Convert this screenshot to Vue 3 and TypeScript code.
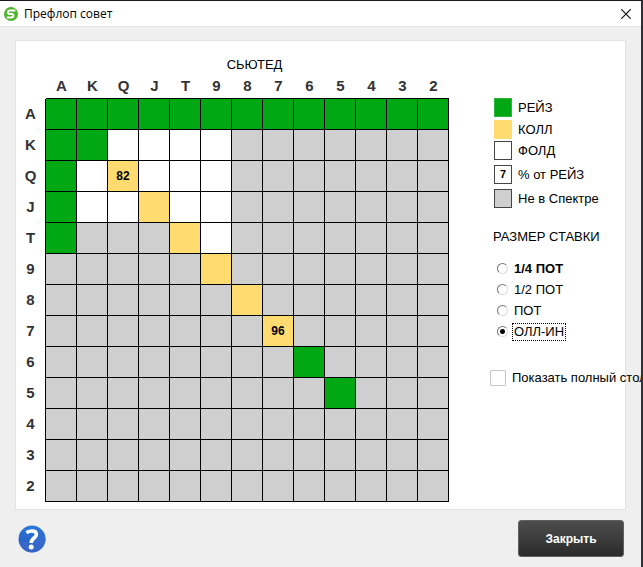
<script setup lang="ts">
import { ref } from 'vue'

type Action = 'raise' | 'call' | 'fold' | 'out'

interface Cell {
  action: Action
  percent?: number
}

const ranks = ['A', 'K', 'Q', 'J', 'T', '9', '8', '7', '6', '5', '4', '3', '2']

// One letter per hand: r = raise, c = call, f = fold, "-" = out of range
const range = [
  'rrrrrrrrrrrrr',
  'rrffff-------',
  'rfcfff-------',
  'rffcff-------',
  'r---cf-------',
  '-----c-------',
  '------c------',
  '-------c-----',
  '--------r----',
  '---------r---',
  '-------------',
  '-------------',
  '-------------',
]

const actions: Record<string, Action> = { r: 'raise', c: 'call', f: 'fold', '-': 'out' }
const percents: Record<string, number> = { QQ: 82, '77': 96 }

const rows: Cell[][] = range.map((line, y) =>
  [...line].map((code, x) => ({
    action: actions[code],
    percent: percents[ranks[y] + ranks[x]],
  })),
)

const legend: { kind: Action | 'percent'; label: string; sample?: string }[] = [
  { kind: 'raise', label: 'РЕЙЗ' },
  { kind: 'call', label: 'КОЛЛ' },
  { kind: 'fold', label: 'ФОЛД' },
  { kind: 'percent', label: '% от РЕЙЗ', sample: '7' },
  { kind: 'out', label: 'Не в Спектре' },
]

const sizes = [
  { value: 'quarter', label: '1/4 ПОТ', strong: true },
  { value: 'half', label: '1/2 ПОТ', strong: false },
  { value: 'pot', label: 'ПОТ', strong: false },
  { value: 'allin', label: 'ОЛЛ-ИН', strong: false },
]

const betSize = ref('allin')
const fullTable = ref(false)
</script>

<template>
  <div class="window">
    <header class="titlebar">
      <svg class="logo" viewBox="0 0 14 14" aria-hidden="true">
        <circle cx="7" cy="7" r="7" fill="#4db52c" />
        <path
          d="M11.4 3.5H6.2C4.6 3.5 3.8 4.2 3.8 5.2C3.8 6.400 4.600 6.800 6 6.900L8 7.100C9 7.200 9.500 7.600 9.500 8.300C9.500 9.700 8.500 10.500 6.800 10.500H2.800"
          fill="none"
          stroke="#fff"
          stroke-width="2"
        />
      </svg>
      <h1>Префлоп совет</h1>
      <button class="close" type="button" aria-label="Закрыть окно">
        <svg viewBox="0 0 10 10" aria-hidden="true">
          <path d="M0.3 0.3L9.7 9.7M9.7 0.3L0.3 9.7" fill="none" stroke="#111" stroke-width="1.2" />
        </svg>
      </button>
    </header>

    <main class="panel">
      <table class="chart">
        <caption>СЬЮТЕД</caption>
        <thead>
          <tr>
            <td class="corner"></td>
            <th v-for="rank in ranks" :key="rank" scope="col">{{ rank }}</th>
          </tr>
        </thead>
        <tbody>
          <tr v-for="(row, y) in rows" :key="ranks[y]">
            <th scope="row">{{ ranks[y] }}</th>
            <td v-for="(cell, x) in row" :key="x" :class="cell.action">{{ cell.percent }}</td>
          </tr>
        </tbody>
      </table>

      <aside class="side">
        <ul class="legend">
          <li v-for="item in legend" :key="item.kind">
            <span class="swatch" :class="item.kind">{{ item.sample }}</span>
            <span>{{ item.label }}</span>
          </li>
        </ul>

        <fieldset class="sizes">
          <legend>РАЗМЕР СТАВКИ</legend>
          <label v-for="size in sizes" :key="size.value" :class="{ strong: size.strong }">
            <input v-model="betSize" type="radio" name="bet-size" :value="size.value" />
            <span>{{ size.label }}</span>
          </label>
        </fieldset>

        <label class="full">
          <input v-model="fullTable" type="checkbox" />
          <span>Показать полный стол</span>
        </label>
      </aside>
    </main>

    <footer class="footer">
      <button class="help" type="button" aria-label="Справка">
        <svg viewBox="0 0 28 28" aria-hidden="true">
          <defs>
            <linearGradient id="help-fill" x1="0" y1="0" x2="0" y2="1">
              <stop offset="0" stop-color="#2a78d8" />
              <stop offset="1" stop-color="#2c55bd" />
            </linearGradient>
          </defs>
          <circle cx="14" cy="14" r="13.5" fill="url(#help-fill)" />
          <path d="M1 17C9 18 20 14 26.500 8.500A13.500 13.500 0 0 1 8 26C4.500 24 2 21 1 17Z" fill="#3f6fd2" opacity="0.5" />
          <path
            d="M8.400 7.600C10.400 6.400 12.400 6 14 6C17 6 18.400 7.300 18.400 9.500C18.400 13 13.200 13.200 13.200 18"
            fill="none"
            stroke="#fff"
            stroke-width="3.600"
          />
          <circle cx="13.200" cy="22" r="2.500" fill="#fff" />
        </svg>
      </button>
      <button class="dismiss" type="button">Закрыть</button>
    </footer>
  </div>
</template>

<style>
body {
  margin: 0;
}
</style>

<style scoped>
.window {
  box-sizing: border-box;
  display: flex;
  flex-direction: column;
  min-height: 100vh;
  overflow: hidden;
  border-top: 1px solid #1c1a20;
  border-right: 2px solid #303032;
  background: #efefef;
  color: #000;
  font: 13px/16px "Liberation Sans", Arial, sans-serif;
}

.titlebar {
  display: flex;
  align-items: center;
  height: 25px;
  padding: 0 10px 0 4px;
  border-bottom: 1px solid #e2e4e6;
  background: #fff;
}

.logo {
  width: 14px;
  height: 14px;
}

h1 {
  flex: 1;
  margin: 0 0 0 6px;
  font: 12px/16px "Open Sans", "Noto Sans", sans-serif;
}

button {
  padding: 0;
  border: 0;
  background: none;
  cursor: pointer;
}

.close,
.close svg {
  display: block;
  width: 10px;
  height: 10px;
}

.panel {
  display: flex;
  align-items: flex-start;
  margin: 13px 15px 0;
  padding-bottom: 7px;
  border: 1px solid #e3e3e3;
  background: #fff;
}

.chart {
  flex: none;
  border-spacing: 0;
  font-size: 12px;
  font-weight: bold;
  text-align: center;
}

.chart caption {
  padding: 16px 0 0 44px;
  font-size: 13px;
  font-weight: normal;
}

.chart th,
.chart td {
  box-sizing: border-box;
  width: 31px;
  height: 31px;
  padding: 0;
  border-right: 1px solid #000;
  border-bottom: 1px solid #000;
}

.chart th {
  color: #333;
  font-size: 15px;
}

.chart thead th,
.chart thead td {
  height: 26px;
  border-right: 0;
}

.chart .corner,
.chart tbody th {
  width: 30px;
  border-bottom: 0;
}

.chart tbody th {
  padding-bottom: 2px;
}

.raise {
  background: #00a914;
}

.call {
  background: #ffdb70;
}

.fold,
.percent {
  background: #fff;
}

.out {
  background: #cfcfcf;
}

.side {
  flex: 1;
  min-width: 0;
  padding: 57px 0 0 41px;
  white-space: nowrap;
}

.legend {
  display: grid;
  grid-template-rows: 22px 21px 24px 24px 19px;
  margin: 0;
  padding: 0 0 0 4px;
  list-style: none;
}

.legend li {
  display: flex;
  align-items: flex-start;
  gap: 6px;
  line-height: 20px;
}

.swatch {
  box-sizing: border-box;
  width: 18px;
  height: 19px;
  border: 1px solid #444;
  font-size: 11px;
  font-weight: bold;
  line-height: 17px;
  text-align: center;
}

.swatch.raise {
  border-color: #2fb53e;
}

.swatch.call {
  border-color: #ffdb70;
}

.sizes {
  margin: 21px 0 0;
  padding: 0;
  border: 0;
}

.sizes legend {
  margin-bottom: 13px;
  padding: 0 0 0 3px;
}

.sizes label,
.full {
  display: flex;
  align-items: center;
}

.sizes label {
  gap: 4px;
  height: 21px;
  padding-left: 7px;
}

.sizes span {
  padding: 0 1px;
  border: 1px solid transparent;
}

.sizes .strong {
  font-weight: bold;
}

.sizes input:checked + span {
  border: 1px dotted #000;
}

input {
  flex: none;
  box-sizing: border-box;
  margin: 0;
  appearance: none;
  background: #fff;
}

.sizes input {
  width: 11px;
  height: 11px;
  border: 1px solid;
  border-color: #777 #ddd #ddd #777;
  border-radius: 50%;
}

.sizes input:checked {
  background: radial-gradient(circle, #000 2px, #fff 3px);
}

.full {
  gap: 6px;
  margin-top: 28px;
}

.full input {
  width: 16px;
  height: 16px;
  border: 1px solid #c8c8c8;
  border-radius: 1px;
}

.full input:checked {
  background: #555;
}

.footer {
  display: flex;
  align-items: center;
  justify-content: space-between;
  padding: 10px 17px 9px 18px;
}

.help,
.help svg {
  display: block;
  width: 28px;
  height: 28px;
}

.dismiss {
  box-sizing: border-box;
  width: 106px;
  height: 37px;
  border: 1px solid #606060;
  border-radius: 3px;
  background: linear-gradient(#4d4d4d, #2b2b2b);
  color: #fff;
  font: bold 12px/16px "Liberation Sans", Arial, sans-serif;
}
</style>
